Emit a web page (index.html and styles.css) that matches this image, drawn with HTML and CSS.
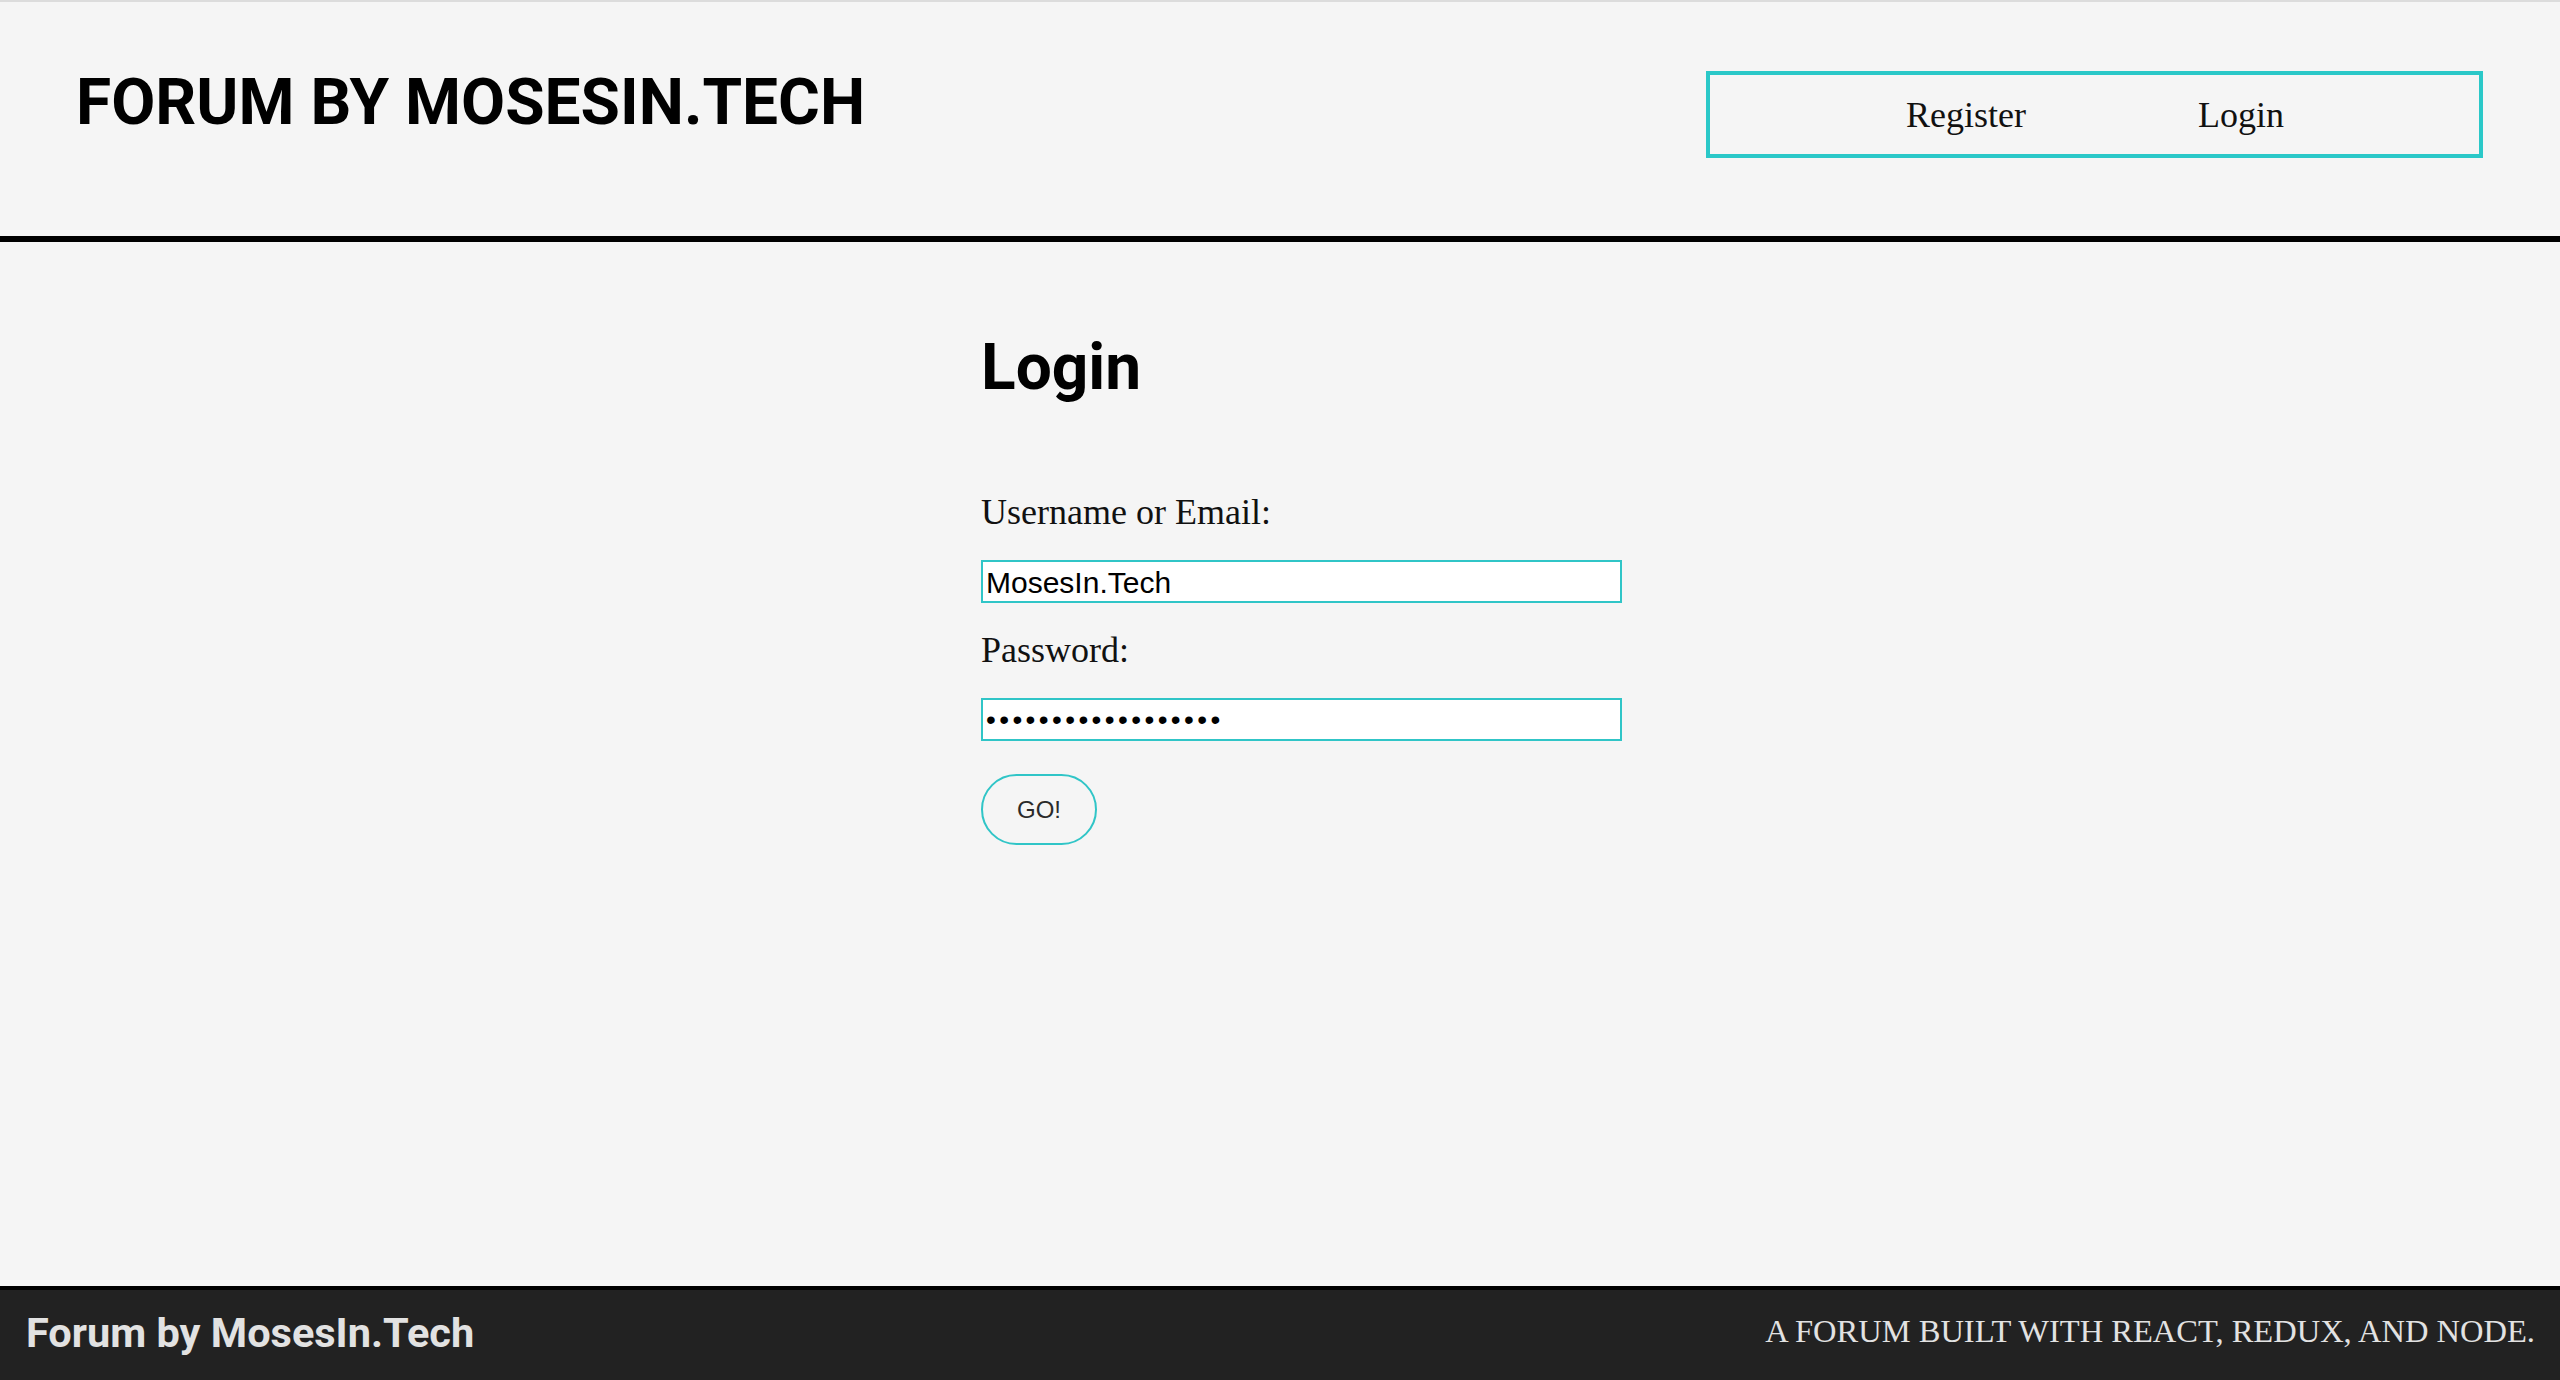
FILE: index.html
```html
<!DOCTYPE html>
<html lang="en">
<head>
<meta charset="utf-8">
<title>Forum by MosesIn.Tech - Login</title>
<link rel="stylesheet" href="styles.css">
</head>
<body>
<header class="site-header">
  <h1 class="site-title">FORUM BY MOSESIN.TECH</h1>
  <nav class="site-nav">
    <a class="nav-link" href="#">Register</a>
    <a class="nav-link" href="#">Login</a>
  </nav>
</header>
<main class="main">
  <section class="login">
    <h2 class="login-title">Login</h2>
    <form class="login-form">
      <label class="field-label" for="user">Username or Email:</label>
      <input class="field-input" id="user" type="text" value="MosesIn.Tech">
      <label class="field-label" for="pass">Password:</label>
      <input class="field-input field-password" id="pass" type="password" value="abcdefghijklmnopqr">
      <button class="go-btn" type="button">GO!</button>
    </form>
  </section>
</main>
<footer class="site-footer">
  <span class="footer-brand">Forum by MosesIn.Tech</span>
  <span class="footer-tagline">A FORUM BUILT WITH REACT, REDUX, AND NODE.</span>
</footer>
</body>
</html>
```
FILE: styles.css
```css
* { box-sizing: border-box; }

html, body { height: 100%; }

body {
  margin: 0;
  min-height: 100vh;
  display: flex;
  flex-direction: column;
  background: #f5f5f5;
  color: #111;
  font-family: "Liberation Serif", "Times New Roman", serif;
}

/* Header */
.site-header {
  display: flex;
  justify-content: space-between;
  align-items: flex-start;
  height: 242px;
  padding: 0 77px 0 76px;
  border-top: 2px solid #dcdcdc;
  border-bottom: 6px solid #000;
  flex: none;
}

.site-title {
  margin: 63px 0 0;
  font-family: Roboto, "Liberation Sans", sans-serif;
  font-weight: 700;
  font-size: 64px;
  line-height: 75px;
  color: #000;
}

.site-nav {
  margin-top: 69px;
  width: 777px;
  height: 87px;
  border: 4px solid #2ac8c8;
  display: flex;
  align-items: center;
  gap: 172px;
  padding-left: 196px;
}

.nav-link {
  font-size: 36px;
  line-height: 40px;
  color: #111;
  text-decoration: none;
}

/* Main */
.main {
  flex: 1;
}

.login {
  width: 641px;
  margin-left: calc(50% - 299px);
}

.login-title {
  margin: 87px 0 85px;
  font-family: Roboto, "Liberation Sans", sans-serif;
  font-weight: 700;
  font-size: 64px;
  line-height: 78px;
  color: #000;
}

.login-form {
  display: flex;
  flex-direction: column;
  align-items: flex-start;
}

.field-label {
  font-size: 36px;
  line-height: 40px;
  margin-bottom: 28px;
  color: #111;
}

.field-input {
  width: 100%;
  height: 43px;
  margin: 0 0 27px;
  padding: 2px 3px 0;
  border: 2px solid #30c5c7;
  border-radius: 0;
  background: #fff;
  font-family: "Liberation Sans", Arial, sans-serif;
  font-size: 30px;
  color: #000;
  outline: none;
}

.field-password {
  padding-top: 0;
  font-size: 28px;
  letter-spacing: 3.4px;
  margin-bottom: 33px;
}

.go-btn {
  height: 71px;
  padding: 0 34px;
  border: 2px solid #30c5c7;
  border-radius: 36px;
  background: transparent;
  font-family: "Liberation Sans", Arial, sans-serif;
  font-size: 24px;
  line-height: 27px;
  color: #2a2a2a;
  cursor: pointer;
}

/* Footer */
.site-footer {
  flex: none;
  height: 94px;
  border-top: 4px solid #000;
  background: #222;
  color: #e2e2e2;
  display: flex;
  justify-content: space-between;
  align-items: flex-start;
  padding: 0 25px 0 26px;
}

.footer-brand {
  margin-top: 18px;
  font-family: Roboto, "Liberation Sans", sans-serif;
  font-weight: 700;
  font-size: 41.5px;
  line-height: 50px;
}

.footer-tagline {
  margin-top: 23px;
  font-size: 32.5px;
  line-height: 36px;
}
```
